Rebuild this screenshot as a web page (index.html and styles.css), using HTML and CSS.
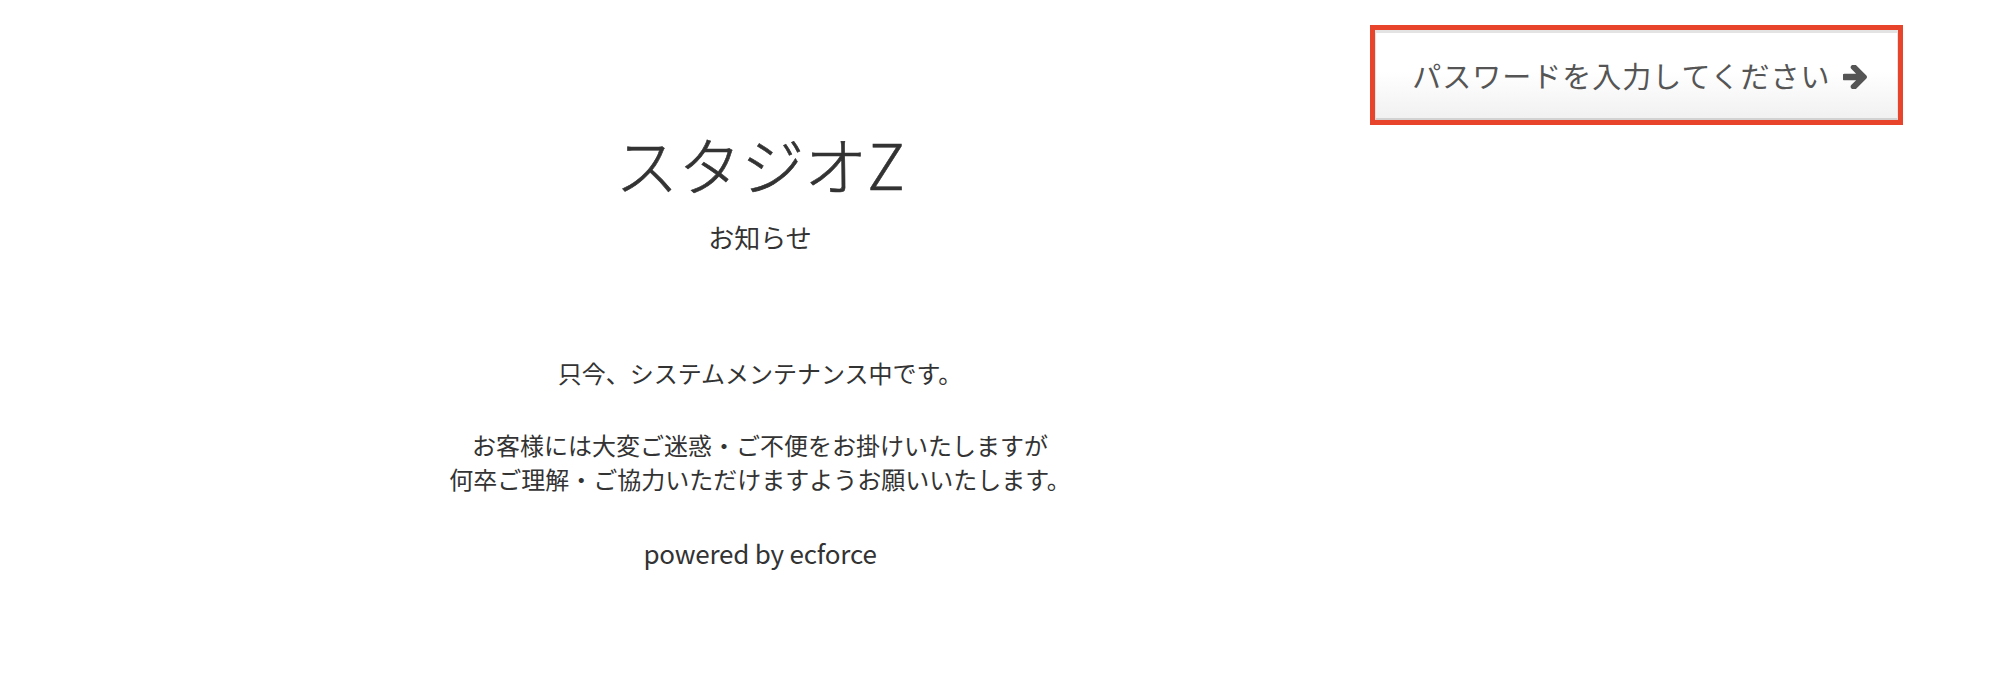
FILE: index.html
```html
<!DOCTYPE html>
<html lang="ja">
<head>
<meta charset="utf-8">
<title>スタジオZ</title>
<link rel="stylesheet" href="styles.css">
</head>
<body>
  <header class="topbar">
    <div class="btn-frame">
      <a class="pw-btn" href="#">
        <span class="pw-label">パスワードを入力してください</span>
        <svg class="pw-arrow" viewBox="165 272 1435 1376" aria-hidden="true"><path d="M1600 960q0 54-37 91l-651 651q-39 37-91 37-51 0-90-37l-75-75q-38-38-38-91t38-91l293-293h-704q-52 0-84.5-37.5t-32.5-90.5v-128q0-53 32.5-90.5t84.5-37.5h704l-293-294q-38-36-38-90t38-90l75-75q38-38 90-38 53 0 91 38l651 651q37 35 37 90z"/></svg>
      </a>
    </div>
  </header>
  <main class="content">
    <h1 class="shop-name">スタジオZ</h1>
    <h2 class="subtitle">お知らせ</h2>
    <p class="msg msg-first">只今、システムメンテナンス中です。</p>
    <p class="msg">お客様には大変ご迷惑・ご不便をお掛けいたしますが<br>何卒ご理解・ご協力いただけますようお願いいたします。</p>
    <p class="msg powered">powered by ecforce</p>
  </main>
</body>
</html>
```

FILE: styles.css
```css
html, body {
  margin: 0;
  padding: 0;
  background: #ffffff;
}
body {
  font-family: "Noto Sans CJK JP", "Noto Sans", sans-serif;
  color: #333333;
  width: 2012px;
  height: 686px;
  overflow: hidden;
}
.topbar {
  display: flex;
  justify-content: flex-end;
  padding: 25px 109px 0 0;
}
.btn-frame {
  width: 523px;
  height: 90px;
  border: 5px solid #e8432b;
  display: flex;
}
.pw-btn {
  flex: 1;
  display: flex;
  align-items: center;
  justify-content: center;
  gap: 12px;
  box-sizing: border-box;
  border-top: 3px solid #e3e3e3;
  border-bottom: 2px solid #d2d2d2;
  border-left: 1px solid #e4e4e4;
  border-right: 1px solid #e4e4e4;
  background: linear-gradient(#ffffff 0%, #ffffff 45%, #f1f1f1 100%);
  color: #555555;
  text-decoration: none;
  padding: 0 0 0 6px;
}
.pw-label {
  font-size: 29px;
  line-height: 1;
  letter-spacing: 1px;
}
.pw-arrow {
  width: 24px;
  height: 24px;
  fill: #555555;
  margin-top: 2px;
}
.content {
  width: 1520px;
  text-align: center;
}
.shop-name {
  margin: 2px 0 0;
  font-size: 63px;
  line-height: 72px;
  font-weight: 300;
  color: #333333;
  -webkit-text-stroke: 0.6px #333333;
}
.subtitle {
  margin: 20px 0 0;
  font-size: 26px;
  line-height: 36px;
  font-weight: 400;
  color: #333333;
}
.msg {
  margin: 38px 0 0;
  font-size: 24px;
  line-height: 34px;
  color: #333333;
}
.msg-first {
  margin-top: 101px;
}
.powered {
  margin-top: 40px;
  font-size: 26px;
  font-weight: 400;
  letter-spacing: -0.2px;
}
```
